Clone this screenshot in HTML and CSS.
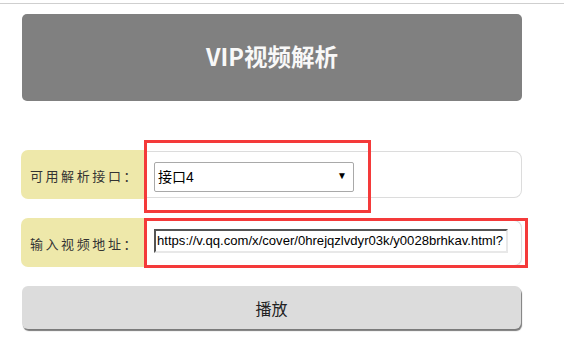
FILE: index.html
```html
<!DOCTYPE html>
<html lang="zh-CN">
<head>
<meta charset="utf-8">
<title>VIP视频解析</title>
<link rel="stylesheet" href="styles.css">
</head>
<body>
<div class="topline"></div>
<div class="container">
  <div class="header">VIP视频解析</div>
  <div class="form">
    <div class="row">
      <div class="label">可用解析接口：</div>
      <div class="field field-select">
        <div class="select-wrap">
          <select class="select">
            <option>接口4</option>
          </select>
          <span class="arrow">▼</span>
        </div>
      </div>
    </div>
    <div class="row row-second">
      <div class="label">输入视频地址：</div>
      <div class="field field-input">
        <input class="url" type="text" value="https://v.qq.com/x/cover/0hrejqzlvdyr03k/y0028brhkav.html?">
      </div>
    </div>
    <div class="play">播放</div>
  </div>
</div>
<div class="mark mark-one"></div>
<div class="mark mark-two"></div>
</body>
</html>
```
FILE: styles.css
```css
html, body {
  margin: 0;
  padding: 0;
  background: #fff;
}
body {
  font-family: "Liberation Sans", "Noto Sans CJK SC", sans-serif;
  position: relative;
  width: 564px;
  height: 352px;
  overflow: hidden;
}
.topline {
  margin-top: 3px;
  border-top: 1px solid #cfcfcf;
}
.container {
  width: 500px;
  margin-left: 22px;
  padding-top: 10px;
}
.header {
  height: 87px;
  background: #808080;
  border-radius: 5px;
  display: flex;
  align-items: center;
  justify-content: center;
  color: #f8f8f8;
  font-family: "Noto Sans CJK SC", sans-serif;
  font-weight: 700;
  font-size: 23.5px;
  padding-bottom: 4px;
  box-sizing: border-box;
}
.form {
  margin-top: 49px;
}
.row {
  display: flex;
  align-items: center;
  margin-left: -1px;
}
.row-second {
  margin-top: 19px;
}
.label {
  width: 125px;
  height: 49px;
  background: #eee8aa;
  border-radius: 7px 0 0 7px;
  display: flex;
  align-items: center;
  justify-content: center;
  font-family: "Liberation Serif", "Noto Sans CJK SC", serif;
  font-size: 13px;
  letter-spacing: 2.6px;
  color: #333;
  box-sizing: border-box;
  padding-top: 2px;
  padding-left: 2px;
}
.field {
  flex: 1;
  height: 47px;
  box-sizing: border-box;
  border: 1px solid #dcdcdc;
  border-left: none;
  border-radius: 0 8px 8px 0;
  padding-left: 8px;
  padding-top: 10px;
}
.field-input {
  height: 46px;
  padding-top: 8px;
  box-shadow: 0 1px 1px #e6e6e6;
}
.select-wrap {
  position: relative;
  width: 200px;
  height: 30px;
}
.select {
  appearance: none;
  -webkit-appearance: none;
  width: 200px;
  height: 30px;
  box-sizing: border-box;
  border: 1px solid #a9a9a9;
  border-radius: 2px;
  background: #fff;
  font-family: "Liberation Sans", "Noto Sans CJK SC", sans-serif;
  font-size: 14px;
  color: #000;
  padding: 0 0 0 3px;
  margin: 0;
}
.arrow {
  position: absolute;
  right: 7px;
  top: 8px;
  font-size: 10px;
  line-height: 12px;
  color: #000;
  pointer-events: none;
}
.url {
  width: 354px;
  height: 24px;
  box-sizing: border-box;
  border: 2px inset #a8a8a8;
  border-right-color: #e8e8e8;
  border-bottom-color: #e8e8e8;
  padding: 0 0 0 1px;
  margin: 0;
  font-family: "Liberation Sans", sans-serif;
  font-size: 13.1px;
  color: #000;
  background: #fff;
}
.play {
  margin-top: 19px;
  height: 43px;
  width: 499px;
  background: #dcdcdc;
  border-radius: 6px;
  box-shadow: 1px 2px 1px #7a7a7a;
  display: flex;
  align-items: center;
  justify-content: center;
  font-family: "Noto Sans CJK SC", sans-serif;
  font-size: 16px;
  color: #222;
}
.mark {
  position: absolute;
  border: 3px solid #f43a3a;
  box-sizing: border-box;
}
.mark-one {
  left: 144px;
  top: 140px;
  width: 227px;
  height: 73px;
}
.mark-two {
  left: 144px;
  top: 218px;
  width: 384px;
  height: 50px;
}
```
